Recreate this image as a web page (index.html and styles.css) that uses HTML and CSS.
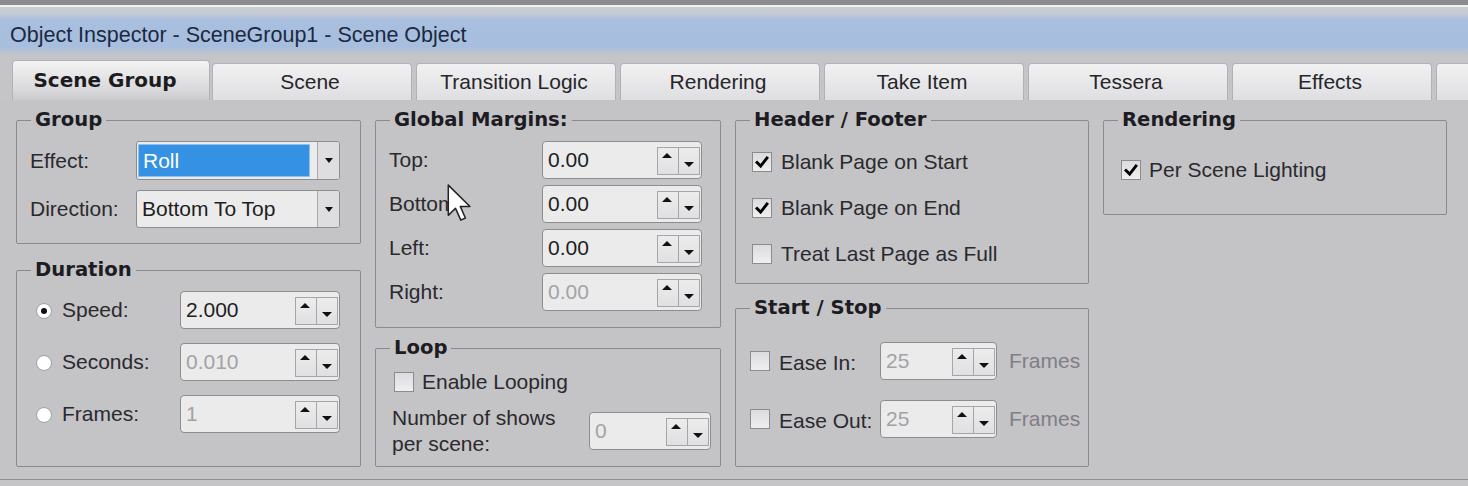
FILE: index.html
```html
<!DOCTYPE html>
<html>
<head>
<meta charset="utf-8">
<title>Object Inspector</title>
<link rel="stylesheet" href="styles.css">
</head>
<body>
<div class="window">
  <div class="topband"></div>
  <div class="topline"></div>
  <div class="titlebar">Object Inspector - SceneGroup1 - Scene Object</div>
  <div class="tabs">
    <div class="tab active">Scene Group</div>
    <div class="tab">Scene</div>
    <div class="tab">Transition Logic</div>
    <div class="tab">Rendering</div>
    <div class="tab">Take Item</div>
    <div class="tab">Tessera</div>
    <div class="tab">Effects</div>
    <div class="tab"></div>
  </div>
  <div class="panel">
    <div class="col col1">
      <fieldset class="box box-group">
        <legend>Group</legend>
        <div class="grid-group">
          <span class="lbl">Effect:</span>
          <div class="combo combo-first"><span class="combo-text sel">Roll</span><span class="combo-btn"><i class="tri-down"></i></span></div>
          <span class="lbl">Direction:</span>
          <div class="combo"><span class="combo-text">Bottom To Top</span><span class="combo-btn"><i class="tri-down"></i></span></div>
        </div>
      </fieldset>
      <fieldset class="box box-duration">
        <legend>Duration</legend>
        <div class="grid-duration">
          <span class="radio on"></span><span class="lbl">Speed:</span>
          <div class="spin"><span class="spin-val">2.000</span><span class="spin-btns"><span class="sb up"></span><span class="sb down"></span></span></div>
          <span class="radio"></span><span class="lbl">Seconds:</span>
          <div class="spin dis"><span class="spin-val">0.010</span><span class="spin-btns"><span class="sb up"></span><span class="sb down"></span></span></div>
          <span class="radio"></span><span class="lbl">Frames:</span>
          <div class="spin dis"><span class="spin-val">1</span><span class="spin-btns"><span class="sb up"></span><span class="sb down"></span></span></div>
        </div>
      </fieldset>
    </div>
    <div class="col col2">
      <fieldset class="box box-margins">
        <legend>Global Margins:</legend>
        <div class="grid-margins">
          <span class="lbl">Top:</span>
          <div class="spin"><span class="spin-val">0.00</span><span class="spin-btns"><span class="sb up"></span><span class="sb down"></span></span></div>
          <span class="lbl">Bottom:</span>
          <div class="spin"><span class="spin-val">0.00</span><span class="spin-btns"><span class="sb up"></span><span class="sb down"></span></span></div>
          <span class="lbl">Left:</span>
          <div class="spin"><span class="spin-val">0.00</span><span class="spin-btns"><span class="sb up"></span><span class="sb down"></span></span></div>
          <span class="lbl">Right:</span>
          <div class="spin dis"><span class="spin-val">0.00</span><span class="spin-btns"><span class="sb up"></span><span class="sb down"></span></span></div>
        </div>
      </fieldset>
      <fieldset class="box box-loop">
        <legend>Loop</legend>
        <div class="loop-body">
          <div class="check-row loop-check"><span class="cb"></span><span class="lbl">Enable Looping</span></div>
          <div class="grid-loop">
            <span class="lbl multi">Number of shows<br>per scene:</span>
            <div class="spin dis"><span class="spin-val">0</span><span class="spin-btns"><span class="sb up"></span><span class="sb down"></span></span></div>
          </div>
        </div>
      </fieldset>
    </div>
    <div class="col col3">
      <fieldset class="box box-hf">
        <legend>Header / Footer</legend>
        <div class="hf-body">
          <div class="check-row"><span class="cb"><svg viewBox="0 0 20 20" width="18" height="18"><path d="M4.5 10.5 L8.5 14.5 L15.5 5.5" fill="none" stroke="#000" stroke-width="3.2" stroke-linecap="square"/></svg></span><span class="lbl">Blank Page on Start</span></div>
          <div class="check-row"><span class="cb"><svg viewBox="0 0 20 20" width="18" height="18"><path d="M4.5 10.5 L8.5 14.5 L15.5 5.5" fill="none" stroke="#000" stroke-width="3.2" stroke-linecap="square"/></svg></span><span class="lbl">Blank Page on End</span></div>
          <div class="check-row"><span class="cb"></span><span class="lbl">Treat Last Page as Full</span></div>
        </div>
      </fieldset>
      <fieldset class="box box-ss">
        <legend>Start / Stop</legend>
        <div class="grid-ss">
          <span class="cb"></span><span class="lbl">Ease In:</span>
          <div class="spin dis"><span class="spin-val">25</span><span class="spin-btns"><span class="sb up"></span><span class="sb down"></span></span></div>
          <span class="unit">Frames</span>
          <span class="cb"></span><span class="lbl">Ease Out:</span>
          <div class="spin dis"><span class="spin-val">25</span><span class="spin-btns"><span class="sb up"></span><span class="sb down"></span></span></div>
          <span class="unit">Frames</span>
        </div>
      </fieldset>
    </div>
    <div class="col col4">
      <fieldset class="box box-render">
        <legend>Rendering</legend>
        <div class="render-body">
          <div class="check-row"><span class="cb"><svg viewBox="0 0 20 20" width="18" height="18"><path d="M4.5 10.5 L8.5 14.5 L15.5 5.5" fill="none" stroke="#000" stroke-width="3.2" stroke-linecap="square"/></svg></span><span class="lbl">Per Scene Lighting</span></div>
        </div>
      </fieldset>
    </div>
  </div>
  <svg class="cursor" viewBox="0 0 13 20" width="25" height="38"><path d="M0.6 0.6 L0.6 16.5 L4.4 12.8 L7.2 19 L9.6 17.9 L6.9 11.8 L12 11.8 Z" fill="#fff" stroke="#222" stroke-width="0.8" stroke-linejoin="round"/></svg>
</div>
</body>
</html>
```

FILE: styles.css
```css
* { box-sizing: border-box; }

body {
  margin: 0;
  width: 1468px;
  height: 486px;
  overflow: hidden;
  background: #c5c5c7;
  font-family: "Liberation Sans", Arial, sans-serif;
  font-size: 21px;
  color: #2a2a2e;
}

.window { position: relative; width: 1468px; height: 486px; overflow: hidden; }

.topband { height: 5px; background: #8c8c8e; }
.topline { height: 2px; background: #f0f0f1; }

.titlebar {
  height: 49px;
  padding: 7px 0 0 10px;
  display: flex;
  align-items: center;
  color: #1b2a40;
  font-size: 21.5px;
  background: linear-gradient(#cbcdd1 0, #c6cad2 6px, #a9bfe0 13px, #a8bedf 40px, #bcc3cf 46px, #c5c5c7 49px);
}

.tabs {
  height: 44px;
  display: flex;
  align-items: flex-end;
  gap: 4px;
  padding-left: 12px;
  overflow: hidden;
}

.tab {
  flex: none;
  width: 200px;
  height: 37px;
  display: flex;
  align-items: center;
  justify-content: center;
  background: linear-gradient(#f1f1f2, #dfdfe1);
  border: 1px solid #b2b2b5;
  border-bottom: none;
  border-radius: 4px 4px 0 0;
  color: #26262a;
  font-size: 21px;
  padding-right: 4px;
}

.tab.active {
  width: 198px;
  height: 41px;
  margin-right: -2px;
  margin-bottom: -1px;
  position: relative;
  z-index: 1;
  background: linear-gradient(#f3f3f4, #dadadc 70%, #c9c9cb);
  font-family: "DejaVu Sans", sans-serif;
  font-weight: bold;
  font-size: 20px;
  color: #1c1c20;
  padding: 0 12px 2px 0;
}

.panel {
  height: 380px;
  display: flex;
  gap: 14px;
  padding: 8px 0 0 16px;
  border-bottom: 1px solid #8e8e91;
  background: #c4c3c6;
}

.col { flex: none; display: flex; flex-direction: column; }
.col1 { width: 345px; gap: 14px; }
.col2 { width: 346px; gap: 8px; }
.col3 { width: 354px; gap: 12px; }
.col4 { width: 344px; }

.box {
  margin: 0;
  padding: 0;
  min-width: 0;
  border: 1px solid #8a8a8d;
  border-radius: 2px;
}

.box legend {
  margin-left: 14px;
  padding: 0 4px;
  font-family: "DejaVu Sans", sans-serif;
  font-weight: bold;
  font-size: 19.6px;
  line-height: 24px;
  color: #1c1c22;
}

.box-group { height: 136px; }
.box-duration { height: 209px; }
.box-margins { height: 220px; }
.box-loop { height: 131px; }
.box-hf { height: 176px; }
.box-ss { height: 171px; }
.box-render { height: 107px; }

.lbl { white-space: nowrap; color: #2a2a2e; }

/* Group */
.grid-group {
  display: grid;
  grid-template-columns: 106px 204px;
  grid-template-rows: 39px 38px;
  row-gap: 10px;
  align-items: center;
  padding: 9px 0 0 13px;
}

.combo {
  height: 100%;
  display: flex;
  border: 1px solid #8d8d90;
  border-radius: 3px;
  background: #ebebec;
}

.combo-text {
  flex: 1;
  display: flex;
  align-items: center;
  margin: 2px 7px 2px 1px;
  padding-left: 4px;
  color: #1e1e22;
}

.combo-text.sel {
  background: #3491e3;
  color: #fff;
  border: 1px solid #8fc1ee;
}

.combo-btn {
  width: 22px;
  display: flex;
  align-items: center;
  justify-content: center;
  border-left: 1px solid #a9a9ac;
  background: #dedee0;
  border-radius: 0 2px 2px 0;
}

.tri-down {
  display: block;
  border-left: 4px solid transparent;
  border-right: 4px solid transparent;
  border-top: 5px solid #111;
}

/* Spinner */
.spin {
  height: 38px;
  display: flex;
  align-items: center;
  padding: 0 1px 0 5px;
  border: 1px solid #8d8d90;
  border-radius: 4px;
  background: #ebebec;
  color: #1e1e22;
}

.spin-val { flex: 1; min-width: 0; }
.spin.dis .spin-val { color: #a2a2a6; }

.spin-btns { display: flex; height: 28px; margin-top: 2px; }

.sb {
  width: 22px;
  display: flex;
  justify-content: center;
  border: 1px solid #a6a6a9;
  background: linear-gradient(#ececed, #e0e0e2);
}

.sb.up { align-items: flex-start; padding: 5px 3px 0 0; }
.sb.down { width: 21px; align-items: flex-end; padding-bottom: 7px; border-left: none; }

.sb.up::before {
  content: "";
  border-left: 5px solid transparent;
  border-right: 5px solid transparent;
  border-bottom: 5px solid #111;
}

.sb.down::before {
  content: "";
  border-left: 5px solid transparent;
  border-right: 5px solid transparent;
  border-top: 5px solid #111;
}

/* Duration */
.grid-duration {
  display: grid;
  grid-template-columns: 26px 118px 160px;
  grid-auto-rows: 38px;
  row-gap: 14px;
  align-items: center;
  padding: 9px 0 0 19px;
}

.radio {
  width: 16px;
  height: 16px;
  border-radius: 50%;
  border: 1px solid #a4a4a8;
  background: radial-gradient(circle, #ffffff 55%, #ececee);
  display: flex;
  align-items: center;
  justify-content: center;
  margin-top: 2px;
}

.radio.on::before {
  content: "";
  width: 6px;
  height: 6px;
  border-radius: 50%;
  background: #111;
}

/* Margins */
.grid-margins {
  display: grid;
  grid-template-columns: 153px 160px;
  grid-auto-rows: 38px;
  row-gap: 6px;
  align-items: center;
  padding: 9px 0 0 13px;
}

/* Checkbox */
.cb {
  flex: none;
  width: 20px;
  height: 20px;
  display: flex;
  align-items: center;
  justify-content: center;
  border: 1px solid #8c8c8f;
  background: linear-gradient(#dcdcde, #efeff0);
}

.check-row { display: flex; align-items: center; height: 30px; }
.check-row .lbl { margin-left: 9px; }

/* Loop */
.loop-body { padding: 10px 0 0 16px; }
.loop-check { height: 24px; }
.loop-check .cb { margin-left: 2px; }
.loop-check .lbl { margin-left: 8px; }

.grid-loop {
  display: grid;
  grid-template-columns: 197px 122px;
  align-items: center;
  margin-top: 11px;
}

.lbl.multi { line-height: 26px; }

/* Header / Footer */
.hf-body {
  display: flex;
  flex-direction: column;
  gap: 16px;
  padding: 15px 0 0 16px;
}

/* Start / Stop */
.grid-ss {
  display: grid;
  grid-template-columns: 29px 101px 117px auto;
  grid-auto-rows: 38px;
  row-gap: 20px;
  align-items: center;
  padding: 22px 0 0 14px;
}

.grid-ss .lbl { padding-top: 3px; }
.unit { padding-left: 12px; color: #7f7f84; }

/* Rendering */
.render-body { padding: 23px 0 0 17px; }
.render-body .lbl { margin-left: 8px; }

/* mouse pointer overlay */
.cursor { position: absolute; left: 447px; top: 184px; }
```
